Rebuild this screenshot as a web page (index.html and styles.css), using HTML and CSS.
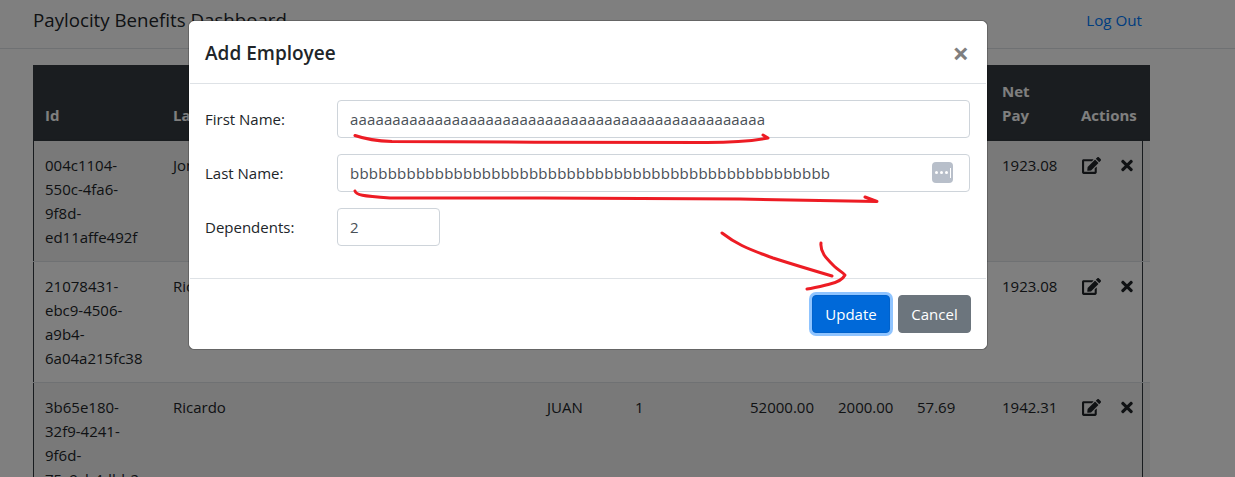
FILE: index.html
```html
<!DOCTYPE html>
<html lang="en">
<head>
    <meta charset="UTF-8">
    <meta name="viewport" content="width=device-width, initial-scale=1.0">
    <title>Paylocity Benefits Dashboard</title>
    <link rel="stylesheet" href="styles.css">
</head>
<body>
    <svg class="icon-defs" width="0" height="0">
        <symbol id="icon-edit" viewBox="0 0 576 512"><path d="M402.6 83.2l90.2 90.2c3.8 3.8 3.8 10 0 13.8L274.4 405.6l-92.8 10.3c-12.4 1.4-22.9-9.1-21.5-21.5l10.3-92.8L388.8 83.2c3.8-3.8 10-3.8 13.8 0zm162-22.9l-48.8-48.8c-15.2-15.2-39.9-15.2-55.2 0l-35.4 35.4c-3.8 3.8-3.8 10 0 13.8l90.2 90.2c3.8 3.8 10 3.8 13.8 0l35.4-35.4c15.2-15.3 15.2-40 0-55.2zM384 346.2V448H64V128h229.8c3.2 0 6.2-1.3 8.5-3.5l40-40c7.6-7.6 2.2-20.5-8.5-20.5H48C21.5 64 0 85.5 0 112v352c0 26.5 21.5 48 48 48h352c26.5 0 48-21.5 48-48V306.2c0-10.7-12.9-16-20.5-8.5l-40 40c-2.2 2.3-3.5 5.3-3.5 8.5z"/></symbol>
        <symbol id="icon-times" viewBox="0 0 352 512"><path d="M242.72 256l100.07-100.07c12.28-12.28 12.28-32.19 0-44.48l-22.24-22.24c-12.28-12.28-32.19-12.28-44.48 0L176 189.28 75.93 89.21c-12.28-12.28-32.19-12.28-44.48 0L9.21 111.45c-12.28 12.28-12.28 32.19 0 44.48L109.28 256 9.21 356.07c-12.28 12.28-12.28 32.19 0 44.48l22.24 22.24c12.28 12.28 32.2 12.28 44.48 0L176 322.72l100.07 100.07c12.28 12.28 32.2 12.28 44.48 0l22.24-22.24c12.28-12.28 12.28-32.19 0-44.48L242.72 256z"/></symbol>
    </svg>

    <header class="topbar">
        <span class="brand">Paylocity Benefits Dashboard</span>
        <a class="logout" href="#">Log Out</a>
    </header>

    <main class="content">
        <div class="table-wrap">
            <table class="employees">
                <colgroup>
                    <col class="col-id"><col class="col-last"><col class="col-first"><col class="col-deps">
                    <col class="col-salary"><col class="col-gross"><col class="col-cost"><col class="col-net"><col class="col-actions">
                </colgroup>
                <thead>
                    <tr>
                        <th>Id</th><th>Last Name</th><th>First Name</th><th>Dependents</th>
                        <th>Salary</th><th>Gross<br>Pay</th><th>Benefits<br>Cost</th><th>Net<br>Pay</th><th>Actions</th>
                    </tr>
                </thead>
                <tbody>
                    <tr>
                        <td>004c1104-550c-4fa6-9f8d-ed11affe492f</td><td>Jones</td><td>JOHN</td><td>0</td>
                        <td>52000.00</td><td>2000.00</td><td>76.92</td><td>1923.08</td>
                        <td class="actions"><svg class="icon-edit"><use href="#icon-edit"/></svg><svg class="icon-times"><use href="#icon-times"/></svg></td>
                    </tr>
                    <tr>
                        <td>21078431-ebc9-4506-a9b4-6a04a215fc38</td><td>Ricardo</td><td>JUAN</td><td>0</td>
                        <td>52000.00</td><td>2000.00</td><td>76.92</td><td>1923.08</td>
                        <td class="actions"><svg class="icon-edit"><use href="#icon-edit"/></svg><svg class="icon-times"><use href="#icon-times"/></svg></td>
                    </tr>
                    <tr>
                        <td>3b65e180-32f9-4241-9f6d-75c9cb4dbb2a</td><td>Ricardo</td><td>JUAN</td><td>1</td>
                        <td>52000.00</td><td>2000.00</td><td>57.69</td><td>1942.31</td>
                        <td class="actions"><svg class="icon-edit"><use href="#icon-edit"/></svg><svg class="icon-times"><use href="#icon-times"/></svg></td>
                    </tr>
                </tbody>
            </table>
        </div>
    </main>

    <div class="backdrop">
        <div class="modal">
            <div class="modal-header">
                <h5>Add Employee</h5>
                <button type="button" class="close">&times;</button>
            </div>
            <form class="modal-body">
                <div class="field">
                    <label for="first-name">First Name:</label>
                    <input id="first-name" type="text" value="aaaaaaaaaaaaaaaaaaaaaaaaaaaaaaaaaaaaaaaaaaaaaaaaa">
                </div>
                <div class="field">
                    <label for="last-name">Last Name:</label>
                    <input id="last-name" type="text" value="bbbbbbbbbbbbbbbbbbbbbbbbbbbbbbbbbbbbbbbbbbbbbbbbbbb">
                    <span class="pw-badge"><i></i><i></i><i></i><b></b></span>
                </div>
                <div class="field">
                    <label for="dependents">Dependents:</label>
                    <input id="dependents" class="short" type="text" value="2">
                </div>
            </form>
            <div class="modal-footer">
                <button type="button" class="btn btn-primary">Update</button>
                <button type="button" class="btn btn-secondary">Cancel</button>
            </div>
        </div>
    </div>

    <!-- red marker scribbles on top of the screenshot -->
    <svg class="scribbles" viewBox="0 0 1235 477" width="1235" height="477">
        <path d="M355 135.5C365 139 378 141 392 141.5C480 142.5 640 142 707 142.5C730 142.5 752 141 768 138L763 135"/>
        <path d="M355 191C356 195 362 196 390 198C500 198 640 198 740 199C790 200 840 201 877 201.5L865 197"/>
        <path d="M722 233C735 243 745 248 773 258C795 265 815 271 832 276"/>
        <path d="M821 243C820 252 826 258 833 265C838 270 845 274 845 275C843 279 838 282 830 284C822 286 815 288 807 289"/>
    </svg>
</body>
</html>
```

FILE: styles.css
```css
html, body {
    height: 100%;
}

body {
    margin: 0;
    overflow: hidden;
    position: relative;
    font-family: "Open Sans", "Liberation Sans", sans-serif;
    font-size: 15px;
    line-height: 24px;
    color: #212529;
    background-color: #fff;
}

.icon-defs {
    display: block;
    height: 0;
}

.topbar {
    display: flex;
    justify-content: space-between;
    height: 49px;
    padding: 5px 93px 0 33px;
    box-sizing: border-box;
    border-bottom: 1px solid #dee2e6;
}

.brand {
    font-size: 18.7px;
    line-height: 30px;
}

.logout {
    color: #007bff;
    text-decoration: none;
    font-size: 15.2px;
    line-height: 30px;
}

.content {
    padding: 16px 0 0 33px;
}

.table-wrap {
    width: 1108px;
    border-left: 1px solid #343a40;
    border-right: 1px solid #343a40;
}

.employees {
    table-layout: fixed;
    border-collapse: collapse;
    width: 1117px;
    margin-left: -1px;
}

.col-id { width: 128px; }
.col-last { width: 374px; }
.col-first { width: 88px; }
.col-deps { width: 115px; }
.col-salary { width: 88px; }
.col-gross { width: 79px; }
.col-cost { width: 85px; }
.col-net { width: 79px; }
.col-actions { width: 81px; }

.employees th {
    padding: 14px 12px 12px;
    text-align: left;
    vertical-align: bottom;
    white-space: nowrap;
    color: #fff;
    background-color: #343a40;
    border-bottom: 2px solid #32383e;
}

.employees td {
    padding: 12px;
    vertical-align: top;
    border-top: 1px solid #dee2e6;
}

.employees tbody tr:nth-child(odd) {
    background-color: rgba(0, 0, 0, .05);
}

.actions {
    white-space: nowrap;
}

.icon-edit {
    width: 19px;
    height: 17px;
    margin-left: 1px;
    fill: #212529;
    vertical-align: -3px;
}

.icon-times {
    width: 12px;
    height: 17px;
    margin-left: 20px;
    fill: #212529;
    vertical-align: -3px;
}

.backdrop {
    position: absolute;
    inset: 0;
    background-color: rgba(0, 0, 0, .5);
    padding: 21px 0 0 189px;
}

.modal {
    width: 798px;
    box-sizing: border-box;
    background-color: #fff;
    border: 1px solid #fff;
    border-radius: 5px;
    box-shadow: 0 0 0 1px rgba(0, 0, 0, .2);
}

.modal-header {
    display: flex;
    justify-content: space-between;
    align-items: center;
    height: 62px;
    padding: 0 17px 0 15px;
    box-sizing: border-box;
    border-bottom: 1px solid #dee2e6;
}

.modal-header h5 {
    margin: 0;
    font-size: 19px;
    font-weight: 600;
}

.close {
    padding: 0;
    border: 0;
    background: none;
    font-family: inherit;
    font-size: 29px;
    font-weight: 700;
    line-height: 1;
    color: #7f7f7f;
}

.modal-body {
    height: 194px;
    padding: 16px 16px 0 15px;
    box-sizing: border-box;
}

.field {
    display: flex;
    align-items: center;
    position: relative;
    margin-bottom: 16px;
}

.field label {
    width: 132px;
    flex: none;
}

.field input {
    width: 633px;
    height: 38px;
    box-sizing: border-box;
    padding: 6px 12px;
    border: 1px solid #ced4da;
    border-radius: 4px;
    font: inherit;
    letter-spacing: .14px;
    color: #495057;
    background-color: #fff;
}

.field input#last-name {
    letter-spacing: .24px;
}

.field input.short {
    width: 103px;
}

.pw-badge {
    position: absolute;
    left: 727px;
    top: 8px;
    width: 21px;
    height: 21px;
    border-radius: 4px;
    background-color: #b8bfca;
    display: flex;
    align-items: center;
    justify-content: center;
    gap: 2px;
}

.pw-badge i {
    width: 3px;
    height: 3px;
    border-radius: 50%;
    background-color: #fff;
}

.pw-badge b {
    width: 1px;
    height: 10px;
    background-color: #fff;
}

.modal-footer {
    display: flex;
    justify-content: flex-end;
    gap: 8px;
    height: 70px;
    padding: 16px 15px 0 0;
    box-sizing: border-box;
    border-top: 1px solid #dee2e6;
}

.btn {
    height: 38px;
    padding: 0 12px;
    border: 1px solid transparent;
    border-radius: 4px;
    font: inherit;
    color: #fff;
}

.btn-primary {
    width: 78px;
    background-color: #0069d9;
    border-color: #0062cc;
    box-shadow: 0 0 0 3px #8fc4ff;
}

.btn-secondary {
    width: 73px;
    background-color: #6c757d;
    border-color: #6c757d;
}

.scribbles {
    position: absolute;
    left: 0;
    top: 0;
    fill: none;
    stroke: #ed1c24;
    stroke-width: 3;
    stroke-linecap: round;
    stroke-linejoin: round;
    pointer-events: none;
}
```
